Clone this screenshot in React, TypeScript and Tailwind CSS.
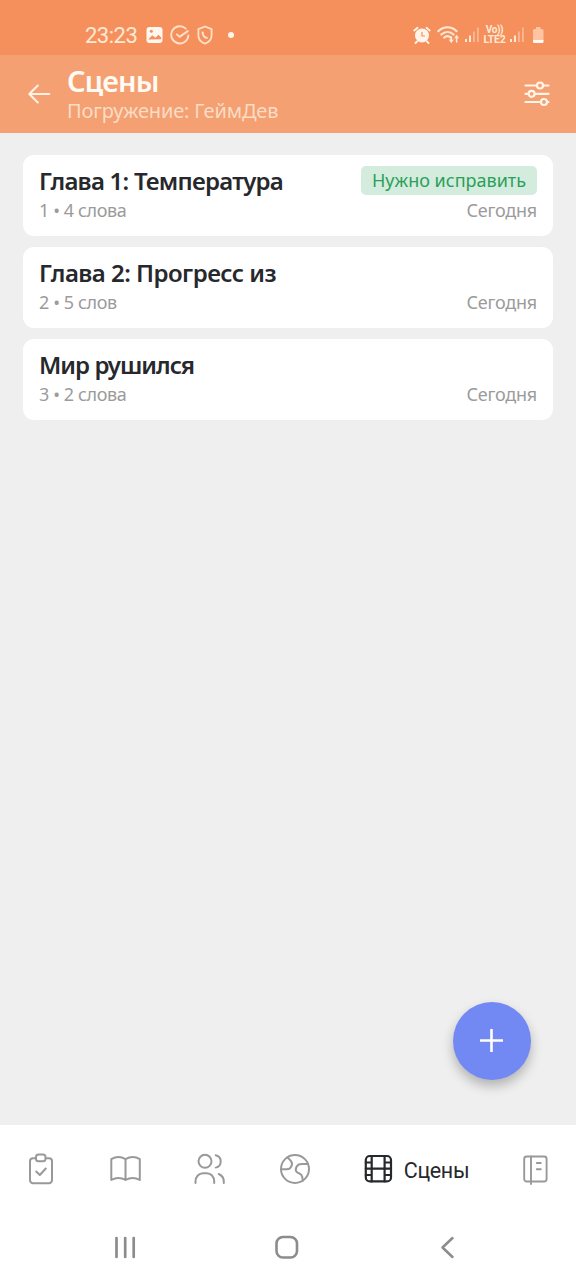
import React from 'react';

interface Scene {
  id: number;
  title: string;
  words: string;
  date: string;
  status?: string;
  titleClass: string;
}

const scenes: Scene[] = [
  { id: 1, title: 'Глава 1: Температура', words: '4 слова', date: 'Сегодня', status: 'Нужно исправить', titleClass: 'tracking-[-0.75px]' },
  { id: 2, title: 'Глава 2: Прогресс из', words: '5 слов', date: 'Сегодня', titleClass: 'tracking-[-0.52px]' },
  { id: 3, title: 'Мир рушился', words: '2 слова', date: 'Сегодня', titleClass: 'tracking-[-0.95px]' },
];

const SignalIcon: React.FC = () => (
  <svg width="16" height="18" viewBox="0 0 16 18" fill="#ffe9d6">
    <rect x="1" y="13" width="2" height="3" />
    <rect x="5" y="9.5" width="2" height="6.5" />
    <rect x="9" y="5.5" width="1.8" height="10.5" opacity="0.45" />
    <rect x="13" y="1.5" width="1.8" height="14.5" opacity="0.45" />
  </svg>
);

const StatusBar: React.FC = () => (
  <div className="h-[55px] shrink-0 bg-[#f5905c] pt-[15px] flex items-center text-[#ffe9d6]">
    <span className="ml-[85px] w-[53px] pt-0.5 font-[Roboto] text-[22px] leading-none whitespace-nowrap tracking-[-0.5px]">23:23</span>
    <svg className="ml-2" width="18" height="18" viewBox="0 0 18 18">
      <rect x="0.5" y="1" width="16" height="16" rx="3" fill="#fff8f0" />
      <path d="M2.2 13.5l4-4.3 3.2 2.5 3-3 2.8 2.8v1.8z" fill="#f5905c" />
      <circle cx="5.3" cy="5.2" r="1.5" fill="#f5905c" />
    </svg>
    <svg className="ml-1.5" width="20" height="20" viewBox="0 0 20 20" fill="none" stroke="#ffe0c8" strokeWidth="1.9" strokeLinecap="round" strokeLinejoin="round">
      <path d="M15.8 3.6A8.6 8.6 0 1 0 18.4 10.5" />
      <path d="M6.8 9.4l2.7 2.5 8.3-5.8" />
    </svg>
    <svg className="ml-1.5" width="18" height="20" viewBox="0 0 18 20" fill="none" stroke="#ffe0c8" strokeWidth="1.8" strokeLinejoin="round">
      <path d="M9 1.5l6.6 2.7v6.3c0 4-3 6.8-6.6 8.1-3.6-1.3-6.6-4.1-6.6-8.1V4.2z" />
      <path d="M6.6 6.6c-.2 3.700 1.900 6.200 5 6.400" strokeWidth="2.2" />
    </svg>
    <span className="ml-[14px] size-1.5 rounded-full bg-[#fff4ea]" />

    <svg className="ml-auto" width="18" height="18" viewBox="0 0 18 18">
      <path d="M1.3 4.5l3.200-2.700M16.700 4.500l-3.200-2.700M4 15.500l-1.500 1.500M14 15.500l1.500 1.500" stroke="#fff4ea" strokeWidth="1.8" strokeLinecap="round" />
      <circle cx="9" cy="9.5" r="7" fill="#fff4ea" />
      <path d="M9 6v4h3" fill="none" stroke="#f5905c" strokeWidth="1.2" />
    </svg>
    <svg className="ml-[6px]" width="23" height="20" viewBox="0 0 23 20" fill="none" stroke="#ffe9d6" strokeWidth="2.1" strokeLinecap="round">
      <path d="M1.3 6.2c5.500-5.200 13-5.200 18.300 0" />
      <path d="M4.3 9.6c3.800-3.500 8.700-3.500 12.300 0" />
      <path d="M7.2 12.6c2-1.800 4.600-1.800 6.500 0" />
      <path d="M14.300 12v4.500M19.600 17v-5" strokeWidth="1.5" />
      <path d="M12.300 15l2 2.800 2-2.800zM17.700 12.800l1.900-2.800 1.900 2.800z" fill="#ffe9d6" strokeWidth="0.5" />
    </svg>
    <span className="ml-[4px] flex"><SignalIcon /></span>
    <span className="ml-[3px] w-[23px] font-[Roboto] font-bold text-[10px] leading-[10px] text-center whitespace-nowrap">
      <span className="block tracking-[-0.4px]">Vo))</span>
      <span className="block text-[10.5px] tracking-[-0.2px]">LTE2</span>
    </span>
    <span className="ml-[3px] flex"><SignalIcon /></span>
    <svg className="ml-[7px] mr-[31px]" width="13" height="18" viewBox="0 0 13 18">
      <path d="M1 4.500q0-1.500 1.500-1.500h1.500v-2h4.500v2h1.500q1.500 0 1.500 1.500v10h-10.500z" fill="#ffc4a2" />
      <path d="M1 14h10.500v1.800q0 1.200-1.200 1.200h-8.100q-1.200 0-1.200-1.200z" fill="#fffaf5" />
    </svg>
  </div>
);

const Header: React.FC = () => (
  <header className="h-[78px] shrink-0 bg-[#f4a072] flex items-center">
    <svg className="ml-[27px]" width="24" height="24" viewBox="0 0 24 24" fill="none" stroke="#fff1e3" strokeWidth="2.1" strokeLinecap="round" strokeLinejoin="round">
      <path d="M22.300 12H2.300M10.800 3.500L2.300 12l8.500 8.500" />
    </svg>
    <div className="ml-4 flex-1 font-['Noto_Sans'] whitespace-nowrap">
      <h1 className="text-[29px] leading-[34px] font-semibold text-[#fffaf3] tracking-[-0.9px]">Сцены</h1>
      <p className="text-[20px] leading-[26px] text-[#fbdcc4] tracking-[-0.15px]">Погружение: ГеймДев</p>
    </div>
    <svg className="mr-[25px]" width="28" height="28" viewBox="0 0 28 28" fill="none" stroke="#fff4e8" strokeWidth="2.2" strokeLinecap="round">
      <path d="M2.500 5.500h11M20.500 5.500h5M2.500 13.800h2.800M12 13.800h13.500M2.500 22h15.200M24 22h1.500" />
      <circle cx="17" cy="5.500" r="3" />
      <circle cx="8.600" cy="13.800" r="3" />
      <circle cx="21" cy="22" r="3" />
    </svg>
  </header>
);

const SceneCard: React.FC<{ scene: Scene }> = ({ scene }) => (
  <article className="h-[81px] rounded-[11px] bg-white px-4 pt-[11px] font-['Noto_Sans'] whitespace-nowrap">
    <div className="flex h-[29px] items-center justify-between">
      <h2 className={`text-[24px] leading-[29px] font-semibold text-[#26282c] ${scene.titleClass}`}>{scene.title}</h2>
      {scene.status && (
        <span className="flex h-[29px] w-[176px] items-center justify-center rounded-[5px] bg-[#d4ecdd] text-[18px] text-[#2b9f5a]">
          {scene.status}
        </span>
      )}
    </div>
    <div className="flex justify-between text-[18px] leading-[30px] text-[#9b9b9b]">
      <span className="tracking-[-0.4px]">{scene.id} • {scene.words}</span>
      <span className="tracking-[-0.2px]">{scene.date}</span>
    </div>
  </article>
);

const NavIcon: React.FC<{ children: React.ReactNode }> = ({ children }) => (
  <svg className="shrink-0" width="32" height="32" viewBox="0 0 32 32" fill="none" stroke="currentColor" strokeWidth="2" strokeLinecap="round" strokeLinejoin="round">
    {children}
  </svg>
);

const BottomNav: React.FC = () => (
  <nav className="h-[88px] shrink-0 bg-white pl-[25px] pr-[25px] flex items-center justify-between text-[#999]">
    <NavIcon>
      <path d="M10.500 5.200H8a3 3 0 0 0-3 3v19a3 3 0 0 0 3 3h16a3 3 0 0 0 3-3v-19a3 3 0 0 0-3-3h-2.500" />
      <rect x="11" y="1.500" width="9.500" height="6.800" rx="2.500" />
      <path d="M11.200 18.500l3.600 3.500 6-6.500" />
    </NavIcon>
    <NavIcon>
      <path d="M16.500 6.200C12.200 3.500 6.700 3.500 2.300 6.200v20.800c4.400-2.500 9.900-2.500 14.200 0 4.500-2.500 10-2.500 14.300 0V6.200c-4.300-2.700-9.800-2.700-14.300 0zM16.500 6.200v20.800" />
    </NavIcon>
    <NavIcon>
      <circle cx="12" cy="8.300" r="6.500" />
      <path d="M2.500 30v-1.500c0-5 3.500-8.300 7.500-8.300h3.700c4.200 0 7.500 3.300 7.500 8.300V30M22.700 2.200c3 .7 5 3.200 5 6.200s-2 5.500-5 6.200M25.800 21c3 1.300 5 4.200 5 7.700V30" />
    </NavIcon>
    <NavIcon>
      <circle cx="17" cy="16" r="14" />
      <path d="M9.600 4.300l3.400 3.800c2.500 3-.2 8.200-4 8.200H3.200M30 11h-6.500c-4.500 0-7.500 5-4.500 8.200 1.800 1.500 4.500.8 5.200 4.500l.6 4" />
    </NavIcon>
    <div className="flex w-[105px] items-center text-[#26282c]">
      <NavIcon>
        <g strokeWidth="2.2">
          <rect x="3.800" y="3" width="25.200" height="25.400" rx="4" />
          <path d="M9.700 3v25.400M22.600 3v25.400M9.700 15.700h12.900M3.800 9.500h5.900M3.800 15.700h5.900M3.800 22h5.900M22.600 9.500H29M22.600 15.700H29M22.600 22H29" />
        </g>
      </NavIcon>
      <span className="ml-[10px] pt-[3px] font-[Roboto] text-[21.5px] leading-[28px] tracking-[-0.35px]">Сцены</span>
    </div>
    <NavIcon>
      <g strokeWidth="1.9">
        <rect x="5.200" y="3.500" width="22.400" height="25" rx="2.500" />
        <path d="M12 3.500V31M17.800 10h4M17.800 16.300h4" />
      </g>
    </NavIcon>
  </nav>
);

const SystemNav: React.FC = () => (
  <div className="h-[67px] shrink-0 bg-white px-[113px] flex items-center justify-between text-[#8c8c8c]">
    <svg width="24" height="24" viewBox="0 0 24 24" stroke="currentColor" strokeWidth="2.700" strokeLinecap="round">
      <path d="M3.500 3v19M12.200 3v19M20.700 3v19" />
    </svg>
    <svg className="mr-[3px]" width="24" height="24" viewBox="0 0 24 24" fill="none" stroke="currentColor" strokeWidth="2.600">
      <rect x="1.500" y="2" width="20.500" height="20.500" rx="6.500" />
    </svg>
    <svg width="24" height="24" viewBox="0 0 24 24" fill="none" stroke="currentColor" strokeWidth="2.500" strokeLinecap="round" strokeLinejoin="round">
      <path d="M13.500 3L3.500 12.500l10 9.500" />
    </svg>
  </div>
);

export default function App() {
  return (
    <div className="flex h-[1280px] w-[576px] flex-col overflow-hidden bg-[#efefef]">
      <StatusBar />
      <Header />
      <main className="flex flex-1 flex-col gap-[11px] px-[23px] pt-[22px]">
        {scenes.map((scene) => (
          <SceneCard key={scene.id} scene={scene} />
        ))}
        <button
          aria-label="Добавить"
          className="mt-auto mb-[45px] mr-[22px] flex size-[78px] items-center justify-center self-end rounded-full bg-[#7289f3] shadow-[0_6px_12px_rgba(0,0,0,0.26)]"
        >
          <svg width="26" height="26" viewBox="0 0 26 26" stroke="#fff" strokeWidth="2.600">
            <path d="M1 12.500h23M12.500 1v23" />
          </svg>
        </button>
      </main>
      <BottomNav />
      <SystemNav />
    </div>
  );
}
